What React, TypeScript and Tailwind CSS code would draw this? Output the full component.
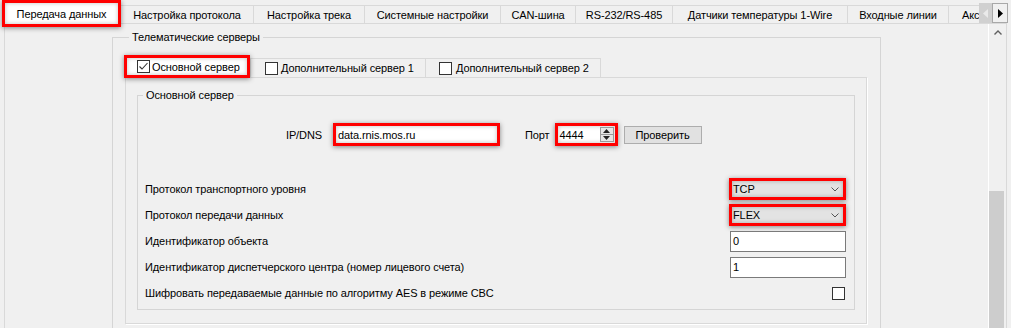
import React from 'react';

const topTabs = [
  { label: 'Настройка протокола', w: 'w-[133px]' },
  { label: 'Настройка трека', w: 'w-[111px]' },
  { label: 'Системные настройки', w: 'w-[136px]' },
  { label: 'CAN-шина', w: 'w-[75px]' },
  { label: 'RS-232/RS-485', w: 'w-[97px]' },
  { label: 'Датчики температуры 1-Wire', w: 'w-[175px]' },
  { label: 'Входные линии', w: 'w-[101px]' },
];

const redBox =
  'border-[3px] border-[#ff0000] shadow-[0_1px_5px_rgba(0,0,0,0.45),inset_0_0_4px_rgba(0,0,0,0.25)]';

const CheckBox = ({ checked = false }: { checked?: boolean }) => (
  <span className="flex h-[13px] w-[13px] shrink-0 items-center justify-center border border-[#333] bg-white">
    {checked && (
      <svg width="11" height="11" viewBox="0 0 11 11">
        <path d="M1.5 5.5 L4 8 L9.5 2" fill="none" stroke="#333" strokeWidth="1.1" />
      </svg>
    )}
  </span>
);

const Chevron = () => (
  <svg width="8" height="5" viewBox="0 0 8 5">
    <polyline points="0.5,0.5 4,4 7.5,0.5" fill="none" stroke="#555" strokeWidth="1" />
  </svg>
);

const Combo = ({ value }: { value: string }) => (
  <div className={`flex h-[22px] w-[117px] items-center justify-between bg-[#e3e3e3] pl-[1px] pr-[4px] ${redBox}`}>
    <span>{value}</span>
    <Chevron />
  </div>
);

const TextInput = ({ value }: { value: string }) => (
  <div className="flex h-[21px] w-[116px] items-center border border-[#7a7a7a] bg-white pl-[2px]">{value}</div>
);

const Row = ({ label, children }: { label: string; children: React.ReactNode }) => (
  <div className="flex h-[26px] items-center justify-between pl-[7px] pr-[8px]">
    <span>{label}</span>
    {children}
  </div>
);

const App = () => {
  return (
    <div className="relative h-[328px] w-[1011px] overflow-hidden whitespace-nowrap bg-[#f0f0f0] font-['Liberation_Sans',Arial,sans-serif] text-[11px] leading-[14px] tracking-[-0.1px] text-black">
      {/* main tab strip */}
      <div className="relative flex h-[23px] items-end">
        <div className={`relative z-10 ml-[2px] flex h-[27px] w-[119px] shrink-0 items-center justify-center self-start bg-white ${redBox}`}>
          Передача данных
        </div>
        {topTabs.map((t) => (
          <div
            key={t.label}
            className={`flex h-[18px] shrink-0 items-center justify-center border-r border-t border-[#d9d9d9] ${t.w}`}
          >
            {t.label}
          </div>
        ))}
        <div className="flex h-[18px] w-[80px] shrink-0 items-center border-t border-[#d9d9d9] pl-[13px]">
          Аксессуары
        </div>
        <div className="absolute left-[979px] right-0 top-0 flex h-[23px] items-start bg-[#f0f0f0] pt-[3px]">
          <div className="flex h-[20px] w-[13px] items-center justify-center bg-[#d0d0d0]">
            <svg width="5" height="9" viewBox="0 0 5 9">
              <polygon points="5,0 0,4.5 5,9" fill="#eaeaea" />
            </svg>
          </div>
          <div className="flex h-[20px] w-[16px] items-center justify-center border border-[#a8a8a8] bg-[#f0f0f0]">
            <svg width="5" height="9" viewBox="0 0 5 9">
              <polygon points="0,0 5,4.5 0,9" fill="#000" />
            </svg>
          </div>
        </div>
      </div>

      {/* tab page */}
      <div className="ml-[4px] flex h-[305px] w-[1003px] border-l border-r border-t border-[#d9d9d9]">
        <div className="flex-1 overflow-hidden">
          <fieldset className="ml-[107px] mt-[6px] h-[320px] w-[769px] border border-[#d5d5d5] px-[11px]">
            <legend className="ml-[5px] px-[3px]">Телематические серверы</legend>
            <div className="pt-[11px]">
              {/* inner tabs */}
              <div className="flex h-[22px] items-end">
                <div className={`relative z-10 flex h-[23px] w-[126px] shrink-0 items-center gap-[2px] self-start bg-white pl-[10px] ${redBox}`}>
                  <CheckBox checked />
                  <span>Основной сервер</span>
                </div>
                <div className="flex h-[19px] w-[176px] shrink-0 items-center gap-[3px] border-l border-r border-t border-[#d9d9d9] pl-[14px]">
                  <CheckBox />
                  <span>Дополнительный сервер 1</span>
                </div>
                <div className="flex h-[19px] w-[175px] shrink-0 items-center gap-[4px] border-r border-t border-[#d9d9d9] pl-[13px]">
                  <CheckBox />
                  <span>Дополнительный сервер 2</span>
                </div>
              </div>

              <div className="ml-[1px] h-[247px] w-[742px] border border-[#d9d9d9] px-[11px] pt-[10px] shadow-[1px_1px_0_#fff]">
                <fieldset className="h-[222px] w-[718px] border border-[#d5d5d5]">
                  <legend className="ml-[5px] px-[3px]">Основной сервер</legend>

                  <div className="mt-[21px] flex h-[23px] items-center">
                    <span className="w-[184px] text-right">IP/DNS</span>
                    <div className={`ml-[11px] flex h-[23px] w-[167px] items-center bg-white pl-[2px] ${redBox}`}>
                      data.rnis.mos.ru
                    </div>
                    <span className="ml-[25px]">Порт</span>
                    <div className={`ml-[5px] flex h-[23px] w-[63px] items-center justify-between bg-white pl-[2px] pr-[1px] ${redBox}`}>
                      <span>4444</span>
                      <div className="flex h-[15px] w-[14px] flex-col border border-[#9a9a9a] bg-[#e6e6e6]">
                        <div className="flex flex-1 items-center justify-center border-b border-[#9a9a9a]">
                          <svg width="7" height="4" viewBox="0 0 7 4">
                            <polygon points="0,4 3.5,0 7,4" fill="#222" />
                          </svg>
                        </div>
                        <div className="flex flex-1 items-center justify-center">
                          <svg width="7" height="4" viewBox="0 0 7 4">
                            <polygon points="0,0 3.5,4 7,0" fill="#222" />
                          </svg>
                        </div>
                      </div>
                    </div>
                    <button className="ml-[6px] flex h-[18px] w-[78px] items-center justify-center border border-[#adadad] bg-[#e1e1e1]">
                      Проверить
                    </button>
                  </div>

                  <div className="mt-[30px]">
                    <Row label="Протокол транспортного уровня">
                      <Combo value="TCP" />
                    </Row>
                    <Row label="Протокол передачи данных">
                      <Combo value="FLEX" />
                    </Row>
                    <Row label="Идентификатор объекта">
                      <TextInput value="0" />
                    </Row>
                    <Row label="Идентификатор диспетчерского центра (номер лицевого счета)">
                      <TextInput value="1" />
                    </Row>
                    <Row label="Шифровать передаваемые данные по алгоритму AES в режиме CBC">
                      <span className="mr-[1px]">
                        <CheckBox />
                      </span>
                    </Row>
                  </div>
                </fieldset>
              </div>
            </div>
          </fieldset>
        </div>

        {/* vertical scrollbar */}
        <div className="flex w-[18px] flex-col border-l border-white">
          <div className="flex h-[17px] items-center justify-center">
            <svg width="8" height="5" viewBox="0 0 8 5">
              <polyline points="0.5,4.5 4,1 7.5,4.5" fill="none" stroke="#606060" strokeWidth="1.4" />
            </svg>
          </div>
          <div className="h-[150px]" />
          <div className="mr-[2px] flex-1 bg-[#cdcdcd]" />
        </div>
      </div>
    </div>
  );
};

export default App;
